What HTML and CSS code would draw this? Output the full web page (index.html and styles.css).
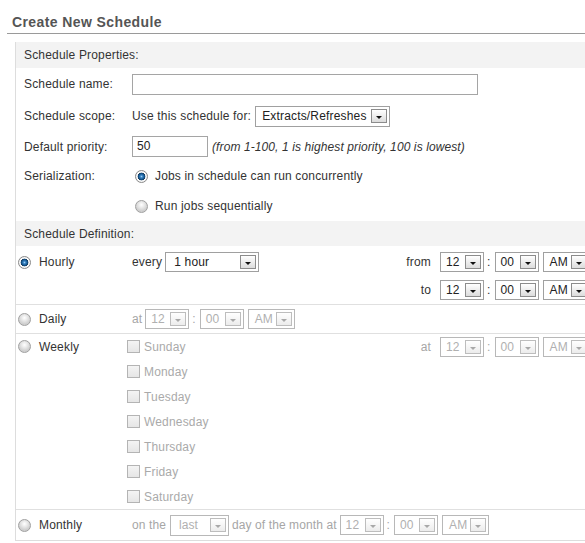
FILE: index.html
```html
<!DOCTYPE html>
<html>
<head>
<meta charset="utf-8">
<title>Create New Schedule</title>
<link rel="stylesheet" href="styles.css">
</head>
<body>
<div class="page">
  <div class="title">Create New Schedule</div>
  <div class="box">
    <div class="band band-top">Schedule Properties:</div>

    <div class="prop row-name">
      <div class="lbl">Schedule name:</div>
      <div class="val"><span class="input input-name"></span></div>
    </div>
    <div class="prop row-scope">
      <div class="lbl">Schedule scope:</div>
      <div class="val">Use this schedule for:<span class="select sel-scope"><span class="sel-text">Extracts/Refreshes</span><span class="btn"></span></span></div>
    </div>
    <div class="prop row-prio">
      <div class="lbl">Default priority:</div>
      <div class="val"><span class="input input-prio">50</span><span class="hint">(from 1-100, 1 is highest priority, 100 is lowest)</span></div>
    </div>
    <div class="prop row-serial">
      <div class="lbl">Serialization:</div>
      <div class="val"><span class="radio on radio-ser"></span>Jobs in schedule can run concurrently</div>
    </div>
    <div class="prop row-serial">
      <div class="lbl"></div>
      <div class="val"><span class="radio radio-ser"></span>Run jobs sequentially</div>
    </div>

    <div class="band band-def">Schedule Definition:</div>

    <div class="sect hourly">
      <div class="opt"><span class="radio on"></span>Hourly</div>
      <div class="mid">every<span class="select sel-hour"><span class="sel-text">1 hour</span><span class="btn"></span></span></div>
      <div class="rlbl">from</div>
      <div class="times">
        <span class="select sel-time"><span class="sel-text">12</span><span class="btn"></span></span><span class="colon">:</span><span class="select sel-time"><span class="sel-text">00</span><span class="btn"></span></span><span class="select sel-time sel-ampm"><span class="sel-text">AM</span><span class="btn"></span></span>
      </div>
      <div class="opt"></div>
      <div class="mid"></div>
      <div class="rlbl">to</div>
      <div class="times">
        <span class="select sel-time"><span class="sel-text">12</span><span class="btn"></span></span><span class="colon">:</span><span class="select sel-time"><span class="sel-text">00</span><span class="btn"></span></span><span class="select sel-time sel-ampm"><span class="sel-text">AM</span><span class="btn"></span></span>
      </div>
    </div>

    <div class="sect daily">
      <div class="opt"><span class="radio"></span>Daily</div>
      <div class="mid dis">at<span class="select sel-time dis sel-first"><span class="sel-text">12</span><span class="btn"></span></span><span class="colon">:</span><span class="select sel-time dis"><span class="sel-text">00</span><span class="btn"></span></span><span class="select sel-time sel-ampm dis"><span class="sel-text">AM</span><span class="btn"></span></span></div>
    </div>

    <div class="sect weekly">
      <div class="opt w-opt"><span class="radio"></span>Weekly</div>
      <div class="days">
        <div class="day"><span class="check"></span>Sunday</div>
        <div class="day"><span class="check"></span>Monday</div>
        <div class="day"><span class="check"></span>Tuesday</div>
        <div class="day"><span class="check"></span>Wednesday</div>
        <div class="day"><span class="check"></span>Thursday</div>
        <div class="day"><span class="check"></span>Friday</div>
        <div class="day"><span class="check"></span>Saturday</div>
      </div>
      <div class="rlbl w-at dis">at</div>
      <div class="times w-times">
        <span class="select sel-time dis"><span class="sel-text">12</span><span class="btn"></span></span><span class="colon dis">:</span><span class="select sel-time dis"><span class="sel-text">00</span><span class="btn"></span></span><span class="select sel-time sel-ampm dis"><span class="sel-text">AM</span><span class="btn"></span></span>
      </div>
    </div>

    <div class="sect monthly">
      <div class="opt"><span class="radio"></span>Monthly</div>
      <div class="mid dis">on the<span class="select sel-last dis"><span class="sel-text">last</span><span class="btn"></span></span>day of the month at<span class="select sel-time dis sel-first"><span class="sel-text">12</span><span class="btn"></span></span><span class="colon">:</span><span class="select sel-time dis"><span class="sel-text">00</span><span class="btn"></span></span><span class="select sel-time sel-ampm dis"><span class="sel-text">AM</span><span class="btn"></span></span></div>
    </div>
  </div>
</div>
</body>
</html>
```

FILE: styles.css
```css
html, body {
  margin: 0;
  padding: 0;
  overflow: hidden;
  background: #ffffff;
}

body {
  font-family: "Liberation Sans", Arial, sans-serif;
  font-size: 12px;
  letter-spacing: 0.17px;
  color: #333333;
}

.page {
  width: 640px;
}

.title {
  margin-left: 7px;
  padding: 14px 0 3px 5px;
  line-height: 16px;
  font-size: 14px;
  font-weight: bold;
  letter-spacing: 0.4px;
  color: #555555;
  border-bottom: 1px solid #9a9a9a;
}

.box {
  margin: 8px 0 0 15px;
  border-left: 1px solid #dddddd;
  border-bottom: 1px solid #dddddd;
}

.band {
  background: #f3f3f3;
  padding-left: 8px;
}

.band-top {
  height: 26px;
  line-height: 27px;
}

.band-def {
  height: 25px;
  line-height: 26px;
}

.prop {
  display: grid;
  grid-template-columns: 116px 1fr;
  align-items: center;
}

.prop .lbl {
  padding-left: 8px;
}

.prop .val {
  display: flex;
  align-items: center;
  white-space: nowrap;
}

.row-name { height: 32px; }
.row-scope { height: 32px; }
.row-prio { height: 29px; }
.row-serial { height: 30px; }

.input {
  box-sizing: border-box;
  display: inline-block;
  height: 21px;
  line-height: 19px;
  border: 1px solid #a5a5a5;
  background: #ffffff;
  padding-left: 4px;
  color: #222222;
}

.input-name { width: 346px; }
.input-prio { width: 76px; }

.hint {
  font-style: italic;
  margin-left: 4px;
  letter-spacing: 0.1px;
}

.radio {
  box-sizing: border-box;
  display: inline-block;
  width: 13px;
  height: 13px;
  border-radius: 50%;
  border: 1px solid #a0a0a0;
  background: radial-gradient(circle at 50% 35%, #ffffff 0, #f0f0f0 2px, #cfcfcf 6px);
  flex: none;
}

.radio.on {
  border-color: #8a8a8a;
  background: radial-gradient(circle at 50% 50%, #9fd0f5 0, #3d87c6 1.2px, #0f4f86 3px, #1b3d5e 3.6px, #ffffff 4.2px, #f2f2f2 5.5px);
}

.radio-ser {
  margin: 0 7px 0 3px;
}

.sect {
  display: grid;
  grid-template-columns: 116px 263px 36px auto;
  align-items: center;
  border-bottom: 1px solid #e0e0e0;
}

.sect .opt {
  display: flex;
  align-items: center;
  padding-left: 2px;
  height: 100%;
}

.sect .opt .radio {
  margin-right: 8px;
}

.hourly {
  padding-top: 2px;
  grid-template-rows: 28px 28px;
}

.daily {
  grid-template-rows: 28px;
}

.weekly {
  grid-template-rows: repeat(7, 25px);
  align-items: start;
}

.w-opt {
  grid-column: 1;
  grid-row: 1;
}

.days {
  grid-column: 2;
  grid-row: 1 / span 7;
  margin-left: -5px;
}

.w-at {
  grid-column: 3;
  grid-row: 1;
}

.w-times {
  grid-column: 4;
  grid-row: 1;
}

.weekly .opt,
.weekly .rlbl,
.weekly .times {
  height: 25px;
  align-items: center;
  display: flex;
}

.weekly .rlbl {
  justify-content: flex-end;
}

.monthly {
  grid-template-columns: 116px auto;
  grid-template-rows: 30px;
  border-bottom: none;
}

.mid {
  display: flex;
  align-items: center;
  white-space: nowrap;
}

.rlbl {
  text-align: right;
}

.times {
  display: flex;
  align-items: center;
  padding-left: 9px;
}

.day {
  height: 25px;
  display: flex;
  align-items: center;
  color: #aaaaaa;
}

.check {
  box-sizing: border-box;
  display: inline-block;
  width: 13px;
  height: 13px;
  border: 1px solid #b4b4b4;
  background: linear-gradient(#f4f4f4, #e6e6e6);
  margin-right: 4px;
}

.dis {
  color: #a6a6a6;
}

.select {
  box-sizing: border-box;
  display: inline-flex;
  align-items: center;
  justify-content: space-between;
  height: 20px;
  border: 1px solid #a0a0a0;
  background: #ffffff;
  padding: 0 2px 0 5px;
  color: #222222;
  flex: none;
}

.select.dis {
  border-color: #b8b8b8;
  color: #b0b0b0;
}

.btn {
  box-sizing: border-box;
  position: relative;
  display: inline-block;
  width: 16px;
  height: 14px;
  border: 1px solid #8c8c8c;
  background: linear-gradient(#ffffff, #dcdcdc);
}

.btn::after {
  content: "";
  position: absolute;
  left: 4px;
  top: 6px;
  border-left: 3px solid transparent;
  border-right: 3px solid transparent;
  border-top: 3px solid #111111;
}

.select.dis .btn {
  border-color: #bdbdbd;
  background: linear-gradient(#ffffff, #ececec);
}

.select.dis .btn::after {
  border-top-color: #a8a8a8;
}

.sel-scope {
  width: 135px;
  height: 21px;
  margin-left: 4px;
  padding-left: 6px;
}

.sel-hour {
  width: 94px;
  margin-left: 3px;
  padding-left: 8px;
}

.sel-time {
  width: 44px;
}

.sel-ampm {
  width: 47px;
  margin-left: 4px;
  padding-left: 6px;
}

.sel-first {
  margin-left: 3px;
}

.sel-last {
  width: 59px;
  height: 21px;
  margin: 0 3px 0 4px;
  padding-left: 8px;
}

.mid.dis {
  letter-spacing: 0.1px;
}

.colon {
  padding: 0 4px 0 3px;
}
```
